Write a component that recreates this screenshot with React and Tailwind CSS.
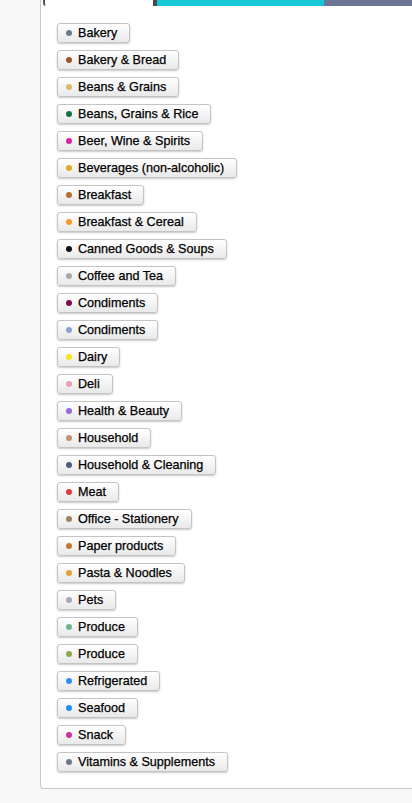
const items = [
  ["Bakery", "#6b7b8c"],
  ["Bakery & Bread", "#a0522d"],
  ["Beans & Grains", "#d8bb66"],
  ["Beans, Grains & Rice", "#17704a"],
  ["Beer, Wine & Spirits", "#d8259e"],
  ["Beverages (non-alcoholic)", "#e3a92a"],
  ["Breakfast", "#b4702e"],
  ["Breakfast & Cereal", "#f39a2a"],
  ["Canned Goods & Soups", "#111111"],
  ["Coffee and Tea", "#a9a9a9"],
  ["Condiments", "#7a0f48"],
  ["Condiments", "#8ea0d2"],
  ["Dairy", "#f5e61c"],
  ["Deli", "#e8a0b2"],
  ["Health & Beauty", "#9a68da"],
  ["Household", "#c29272"],
  ["Household & Cleaning", "#4b5f80"],
  ["Meat", "#e03a3e"],
  ["Office - Stationery", "#a08262"],
  ["Paper products", "#c07a30"],
  ["Pasta & Noodles", "#e4a232"],
  ["Pets", "#a8a9b2"],
  ["Produce", "#6fb28e"],
  ["Produce", "#8fa84e"],
  ["Refrigerated", "#2f8ff2"],
  ["Seafood", "#2290f2"],
  ["Snack", "#d22ca2"],
  ["Vitamins & Supplements", "#6f7889"],
];

export default function App() {
  return (
    <div className="w-full min-h-[803px] bg-[#f8f8f8]" style={{ fontFamily: '"Liberation Sans", Arial, sans-serif' }}>
      <div className="ml-[40px] h-[789px] bg-white border-l border-b border-[#c8c8c8] rounded-bl-[4px] overflow-hidden">
        <div className="flex h-[6px]">
          <div className="w-[2px] bg-white" />
          <div className="w-[110px] bg-white border-l-2 border-[#555] rounded-bl-[3px]" />
          <div className="w-[4px] bg-[#4a4a4a]" />
          <div className="w-[167px] bg-[#17c8d9]" />
          <div className="flex-1 bg-[#6f7594]" />
        </div>
        <div className="flex flex-col items-start gap-[7px] pt-[17px] pl-[16px]">
          {items.map(([label, color], i) => (
            <div
              key={i}
              className="flex items-center h-[20px] pl-[8px] pr-[12px] gap-[6px] rounded-[3px] border border-[#c4c4c4] bg-gradient-to-b from-white to-[#e9e9e9] shadow-[0_1px_2px_rgba(0,0,0,0.22)] text-[12.6px] text-black leading-none [-webkit-text-stroke:0.25px_#000]"
            >
              <span className="w-[6px] h-[6px] rounded-full" style={{ backgroundColor: color }} />
              <span>{label}</span>
            </div>
          ))}
        </div>
      </div>
    </div>
  );
}
